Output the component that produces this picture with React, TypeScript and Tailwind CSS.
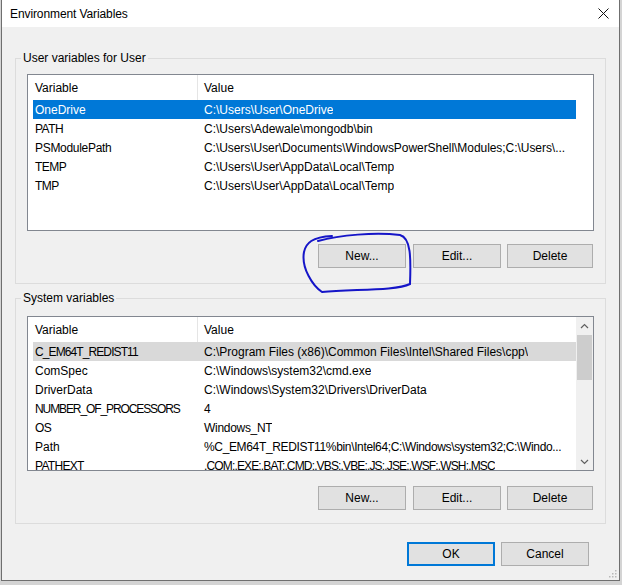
import React from 'react'

type Row = { name: string; value: string; nt?: string; vt?: string }

const userRows: Row[] = [
  { name: 'OneDrive', value: 'C:\\Users\\User\\OneDrive' },
  { name: 'PATH', value: 'C:\\Users\\Adewale\\mongodb\\bin', nt: 'tracking-[-0.5px]' },
  { name: 'PSModulePath', value: 'C:\\Users\\User\\Documents\\WindowsPowerShell\\Modules;C:\\Users\\...', nt: 'tracking-[-0.3px]', vt: 'tracking-[-0.05px]' },
  { name: 'TEMP', value: 'C:\\Users\\User\\AppData\\Local\\Temp', nt: 'tracking-[-0.5px]' },
  { name: 'TMP', value: 'C:\\Users\\User\\AppData\\Local\\Temp', nt: 'tracking-[-0.5px]' },
]

const systemRows: Row[] = [
  { name: 'C_EM64T_REDIST11', value: 'C:\\Program Files (x86)\\Common Files\\Intel\\Shared Files\\cpp\\', nt: 'tracking-[-0.9px]' },
  { name: 'ComSpec', value: 'C:\\Windows\\system32\\cmd.exe' },
  { name: 'DriverData', value: 'C:\\Windows\\System32\\Drivers\\DriverData' },
  { name: 'NUMBER_OF_PROCESSORS', value: '4', nt: 'tracking-[-1.1px]' },
  { name: 'OS', value: 'Windows_NT', nt: 'tracking-[-0.5px]', vt: 'tracking-[-0.3px]' },
  { name: 'Path', value: '%C_EM64T_REDIST11%bin\\Intel64;C:\\Windows\\system32;C:\\Windo...', vt: 'tracking-[-0.35px]' },
  { name: 'PATHEXT', value: '.COM;.EXE;.BAT;.CMD;.VBS;.VBE;.JS;.JSE;.WSF;.WSH;.MSC', nt: 'tracking-[-0.7px]', vt: 'tracking-[-0.85px]' },
]

function Header() {
  return (
    <div className="flex h-[25px] shrink-0 items-center">
      <div className="flex h-full w-[169px] items-center pl-[7px]">Variable</div>
      <div className="h-full w-px bg-[#e5e5e5]" />
      <div className="pl-[6px]">Value</div>
    </div>
  )
}

function ListRow({ row, selected }: { row: Row; selected?: 'focus' | 'dim' }) {
  const tone =
    selected === 'focus'
      ? 'bg-[#0078d7] text-white'
      : selected === 'dim'
        ? 'bg-[#d9d9d9] text-black'
        : 'text-black'
  return (
    <div className={`ml-[5px] flex h-[19px] w-[543px] shrink-0 items-center ${tone}`}>
      <div className={`w-[169px] shrink-0 pl-[2px] whitespace-nowrap ${row.nt ?? ''}`}>{row.name}</div>
      <div className={`overflow-hidden pl-[2px] whitespace-nowrap ${row.vt ?? ''}`}>{row.value}</div>
    </div>
  )
}

function Chevron({ up }: { up?: boolean }) {
  return (
    <svg width="9" height="6" viewBox="0 0 9 6">
      <path
        d={up ? 'M1 5 L4.5 1.5 L8 5' : 'M1 1 L4.5 4.5 L8 1'}
        fill="none"
        stroke="#606060"
        strokeWidth="1.2"
      />
    </svg>
  )
}

function Button({ label, w = 'w-[88px]', primary }: { label: string; w?: string; primary?: boolean }) {
  return (
    <div
      className={`flex h-[24px] ${w} items-center justify-center bg-[#e1e1e1] ${
        primary ? 'border-2 border-[#0078d7]' : 'border border-[#adadad]'
      }`}
    >
      {label}
    </div>
  )
}

function ButtonRow() {
  return (
    <div className="flex justify-end pr-px">
      <Button label="New..." />
      <div className="ml-[7px]">
        <Button label="Edit..." />
      </div>
      <div className="ml-[6px]">
        <Button label="Delete" w="w-[86px]" />
      </div>
    </div>
  )
}

export default function App() {
  return (
    <div className="relative h-[585px] w-[622px] bg-[#d4d4d4] pl-px font-['Liberation_Sans',Arial,sans-serif] text-[12px] leading-[16px] text-black">
      <div className="flex h-[581px] w-[619px] flex-col border-x border-b border-[#6f6f6f] bg-[#f0f0f0]">
        {/* title bar */}
        <div className="flex h-[27px] shrink-0 items-center justify-between bg-white pl-[8px] pr-[10px]">
          <span className="tracking-[-0.1px]">Environment Variables</span>
          <svg width="11" height="11" viewBox="0 0 11 11">
            <path d="M0.5 0.5 L10.5 10.5 M10.5 0.5 L0.5 10.5" stroke="#111" strokeWidth="1" />
          </svg>
        </div>

        <div className="flex flex-1 flex-col px-[13px] pt-[23px]">
          <fieldset className="border border-[#dcdcdc] px-[11px] pb-[15px]">
            <legend className="ml-[-6px] px-[2px] leading-[16px]">User variables for User</legend>
            <div className="mt-[8px] flex h-[157px] flex-col overflow-hidden border border-[#828790] bg-white">
              <Header />
              {userRows.map((r, i) => (
                <ListRow key={r.name} row={r} selected={i === 0 ? 'focus' : undefined} />
              ))}
            </div>
            <div className="mt-[13px]">
              <ButtonRow />
            </div>
          </fieldset>

          <fieldset className="mt-[6px] border border-[#dcdcdc] px-[11px] pb-[13px]">
            <legend className="ml-[-6px] px-[2px] leading-[16px]">System variables</legend>
            <div className="mt-[10px] flex h-[155px] overflow-hidden border border-[#828790] bg-white">
              <div className="flex flex-1 flex-col overflow-hidden">
                <Header />
                {systemRows.map((r, i) => (
                  <ListRow key={r.name} row={r} selected={i === 0 ? 'dim' : undefined} />
                ))}
              </div>
              <div className="flex w-[17px] shrink-0 flex-col bg-[#f0f0f0]">
                <div className="flex h-[17px] items-center justify-center">
                  <Chevron up />
                </div>
                <div className="mx-px mt-px h-[45px] bg-[#cdcdcd]" />
                <div className="flex-1" />
                <div className="flex h-[17px] items-center justify-center">
                  <Chevron />
                </div>
              </div>
            </div>
            <div className="mt-[15px]">
              <ButtonRow />
            </div>
          </fieldset>

          <div className="mt-[18px] flex justify-end gap-[6px] pr-[17px]">
            <Button label="OK" primary />
            <Button label="Cancel" />
          </div>
        </div>
      </div>

      {/* resize grip */}
      <svg className="absolute left-[607px] top-[568px]" width="10" height="10" viewBox="0 0 10 10">
        {[
          [8, 2],
          [5, 5],
          [8, 5],
          [2, 8],
          [5, 8],
          [8, 8],
        ].map(([x, y]) => (
          <rect key={`${x}-${y}`} x={x} y={y} width="1.5" height="1.5" fill="#b8b8b8" />
        ))}
      </svg>

      {/* hand-drawn annotation */}
      <svg className="pointer-events-none absolute left-0 top-0" width="622" height="585" viewBox="0 0 622 585">
        <path
          d="M318 241 C 340 235, 375 232, 400 235 C 411 238, 411 258, 410 284 C 396 291, 352 289, 322 292 C 313 286, 301 268, 304 252 C 306 243, 312 237, 332 236"
          fill="none"
          stroke="#1515c8"
          strokeWidth="2"
          strokeLinecap="round"
        />
      </svg>
    </div>
  )
}
